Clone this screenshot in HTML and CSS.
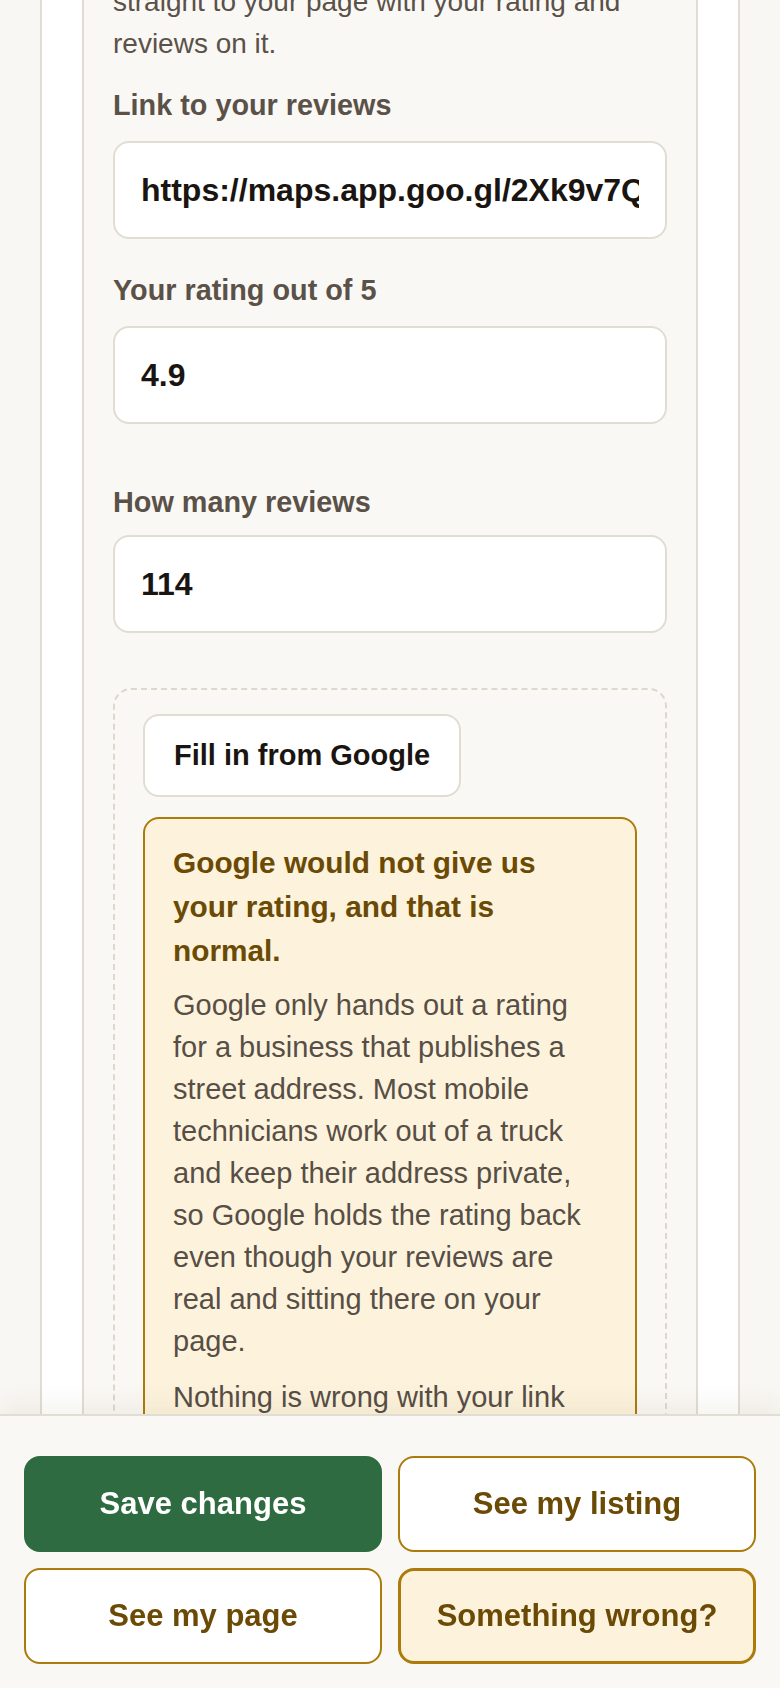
FILE: index.html
```html
<!DOCTYPE html>
<html lang="en">
<head>
<meta charset="utf-8">
<title>Your reviews</title>
<link rel="stylesheet" href="styles.css">
</head>
<body>
<div class="page">
  <div class="outer-card">
    <section class="inner-card">
      <p class="hint">Tapping your stars takes a new customer straight to your page with your rating and reviews on it.</p>

      <div class="field">
        <label class="label" for="link">Link to your reviews</label>
        <input class="input" id="link" type="text" value="https://maps.app.goo.gl/2Xk9v7QpLm3sR8Tq">
      </div>

      <div class="field field-gap">
        <label class="label" for="rating">Your rating out of 5</label>
        <input class="input" id="rating" type="text" value="4.9">
      </div>

      <div class="field field-count">
        <label class="label" for="count">How many reviews</label>
        <input class="input" id="count" type="text" value="114">
      </div>

      <div class="google-box">
        <button class="fill-btn" type="button">Fill in from Google</button>
        <div class="callout">
          <h3 class="callout-title">Google would not give us your rating, and that is normal.</h3>
          <p class="callout-text">Google only hands out a rating for a business that publishes a street address. Most mobile technicians work out of a truck and keep their address private, so Google holds the rating back even though your reviews are real and sitting there on your page.</p>
          <p class="callout-text">Nothing is wrong with your link itself. Type your rating and how many reviews you have into the boxes above, and we will show them on your page.</p>
        </div>
      </div>
    </section>
  </div>
</div>

<div class="action-bar">
  <button class="btn btn-primary" type="button">Save changes</button>
  <button class="btn btn-outline" type="button">See my listing</button>
  <button class="btn btn-outline" type="button">See my page</button>
  <button class="btn btn-warn" type="button">Something wrong?</button>
</div>
</body>
</html>
```

FILE: styles.css
```css
* {
  box-sizing: border-box;
}

html, body {
  margin: 0;
  padding: 0;
}

body {
  background: #f9f7f3;
  font-family: "Liberation Sans", Arial, Helvetica, sans-serif;
  color: #574e46;
}

.page {
  padding: 0 40px 320px;
  margin-top: -140px;
}

.outer-card {
  background: #ffffff;
  border: 2px solid #e2ddd3;
  border-radius: 18px;
  padding: 40px 40px 40px;
}

.inner-card {
  background: #faf8f4;
  border: 2px solid #e2ddd3;
  border-radius: 16px;
  padding: 35px 29px 40px;
}

.hint {
  margin: 0;
  font-size: 28px;
  line-height: 42px;
  color: #5a5149;
}

.field {
  margin-top: 22px;
}

.field + .field {
  margin-top: 33px;
}

.field-gap {
  margin-bottom: 60px;
}

.label {
  display: block;
  font-size: 28.8px;
  line-height: 37px;
  font-weight: 700;
  color: #5a5149;
  margin-bottom: 17px;
}

.field-count .label {
  margin-bottom: 14px;
}

.input {
  display: block;
  width: 100%;
  height: 98px;
  border: 2px solid #e2ddd3;
  border-radius: 16px;
  background: #ffffff;
  padding: 0 26px;
  font-family: "Liberation Sans", Arial, Helvetica, sans-serif;
  font-size: 32px;
  font-weight: 700;
  color: #1a1510;
  outline: none;
}

.google-box {
  margin-top: 55px;
  border: 2px dashed #ddd8ce;
  border-radius: 18px;
  padding: 24px 28px 40px;
}

.fill-btn {
  display: block;
  background: #ffffff;
  border: 2px solid #e2ddd3;
  border-radius: 16px;
  padding: 0 29px;
  height: 83px;
  font-family: "Liberation Sans", Arial, Helvetica, sans-serif;
  font-size: 29px;
  font-weight: 700;
  color: #1a1510;
}

.callout {
  margin-top: 20px;
  background: #fdf3dc;
  border: 2px solid #ab7b0c;
  border-radius: 16px;
  padding: 22px 28px 30px;
}

.callout-title {
  margin: 0;
  font-size: 29.8px;
  line-height: 44px;
  font-weight: 700;
  color: #6b4a05;
}

.callout-text {
  margin: 11px 0 0;
  font-size: 29px;
  line-height: 42px;
  color: #574e46;
}

.callout-text + .callout-text {
  margin-top: 14px;
}

.action-bar {
  position: fixed;
  left: 0;
  right: 0;
  bottom: 0;
  height: 274px;
  background: #faf8f4;
  border-top: 2px solid #e2ddd4;
  box-shadow: 0 -10px 24px rgba(60, 45, 20, 0.06);
  padding: 40px 24px 24px;
  display: grid;
  grid-template-columns: 1fr 1fr;
  grid-auto-rows: 96px;
  column-gap: 16px;
  row-gap: 16px;
}

.btn {
  border-radius: 16px;
  font-family: "Liberation Sans", Arial, Helvetica, sans-serif;
  font-size: 31px;
  font-weight: 700;
  padding: 0 12px;
  height: 96px;
}

.btn-primary {
  background: #2f6b40;
  border: 2px solid #2f6b40;
  color: #ffffff;
}

.btn-outline {
  background: #ffffff;
  border: 2px solid #ab7b0c;
  color: #6b4a05;
}

.btn-warn {
  background: #fdf3dc;
  border: 3px solid #ab7b0c;
  color: #6b4a05;
}
```
